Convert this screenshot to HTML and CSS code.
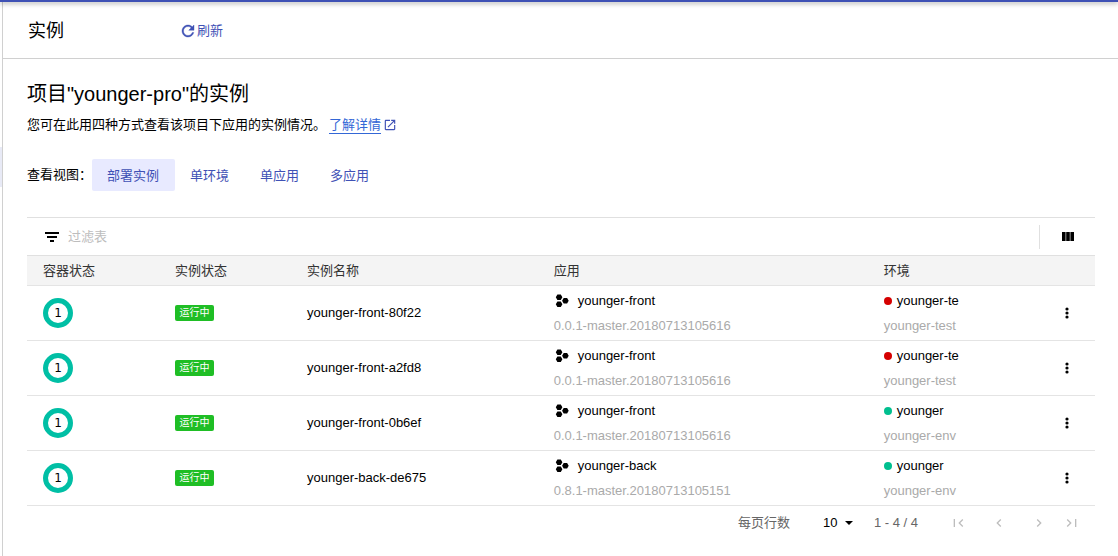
FILE: index.html
```html
<!DOCTYPE html>
<html lang="zh-CN">
<head>
<meta charset="utf-8">
<title>实例</title>
<link rel="stylesheet" href="styles.css">
</head>
<body>
<svg class="sprite" aria-hidden="true">
  <symbol id="more" viewBox="0 0 16 16"><circle cx="8" cy="4" r="1.600"/><circle cx="8" cy="8" r="1.600"/><circle cx="8" cy="12" r="1.600"/></symbol>
  <symbol id="app" viewBox="0 0 14 14"><path d="M2.400.5h3.400l1.600 2.700-1.600 2.700H2.400L.8 3.200zM2.400 7.600h3.400l1.600 2.700L5.800 13H2.400L.8 10.300zM8.700 4h3.400l1.600 2.800-1.600 2.700H8.700L7.100 6.800z"/></symbol>
</svg>
<div class="topbar"></div>
<div class="shell">
  <div class="rail"><div class="rail-active"></div></div>
  <main class="page">
    <header class="page-header">
      <h1 class="page-title">实例</h1>
      <button class="refresh" type="button">
        <svg class="icon-18" viewBox="0 0 24 24"><path stroke="currentColor" stroke-width=".5" d="M17.650 6.350C16.200 4.900 14.210 4 12 4c-4.420 0-7.990 3.580-7.990 8s3.570 8 7.990 8c3.730 0 6.840-2.550 7.730-6h-2.080c-.82 2.330-3.040 4-5.650 4-3.310 0-6-2.690-6-6s2.690-6 6-6c1.660 0 3.140.69 4.220 1.780L13 11h7V4l-2.350 2.350z"/></svg>
        <span>刷新</span>
      </button>
    </header>
    <div class="content">
      <h2 class="heading">项目"younger-pro"的实例</h2>
      <p class="intro">您可在此用四种方式查看该项目下应用的实例情况。<a class="more-link" href="#"><span class="more-text">了解详情</span><svg class="icon-14" viewBox="0 0 24 24"><path d="M19 19H5V5h7V3H5c-1.110 0-2 .9-2 2v14c0 1.100.89 2 2 2h14c1.100 0 2-.9 2-2v-7h-2v7zM14 3v2h3.590l-9.830 9.830 1.410 1.410L19 6.410V10h2V3h-7z"/></svg></a></p>
      <div class="views">
        <span class="views-label">查看视图：</span>
        <button class="view active" type="button">部署实例</button>
        <button class="view" type="button">单环境</button>
        <button class="view" type="button">单应用</button>
        <button class="view" type="button">多应用</button>
      </div>
      <div class="filter">
        <svg class="icon-18" viewBox="0 0 18 18"><path d="M2 4h14v2H2zM4 8h10v2H4zM7 12h4v2H7z"/></svg>
        <input class="filter-input" type="text" placeholder="过滤表" aria-label="过滤表">
        <button class="columns" type="button" aria-label="列"><svg class="icon-columns" viewBox="0 0 12 9"><path d="M0 0h3.600v9H0zM4.200 0h3.600v9H4.200zM8.400 0H12v9H8.400z"/></svg></button>
      </div>
      <table class="grid">
        <colgroup><col class="c-status"><col class="c-status"><col class="c-name"><col class="c-app"><col><col class="c-menu"></colgroup>
        <thead><tr><th>容器状态</th><th>实例状态</th><th>实例名称</th><th>应用</th><th>环境</th><th></th></tr></thead>
        <tbody>
          <tr>
            <td><span class="ring">1</span></td><td><span class="badge">运行中</span></td><td>younger-front-80f22</td>
            <td><div class="line"><svg class="app-icon"><use href="#app"/></svg>younger-front</div><div class="sub">0.0.1-master.20180713105616</div></td>
            <td><div class="line"><i class="dot red"></i>younger-te</div><div class="sub">younger-test</div></td>
            <td class="menu-cell"><button class="menu" type="button" aria-label="更多"><svg class="icon-16"><use href="#more"/></svg></button></td>
          </tr>
          <tr>
            <td><span class="ring">1</span></td><td><span class="badge">运行中</span></td><td>younger-front-a2fd8</td>
            <td><div class="line"><svg class="app-icon"><use href="#app"/></svg>younger-front</div><div class="sub">0.0.1-master.20180713105616</div></td>
            <td><div class="line"><i class="dot red"></i>younger-te</div><div class="sub">younger-test</div></td>
            <td class="menu-cell"><button class="menu" type="button" aria-label="更多"><svg class="icon-16"><use href="#more"/></svg></button></td>
          </tr>
          <tr>
            <td><span class="ring">1</span></td><td><span class="badge">运行中</span></td><td>younger-front-0b6ef</td>
            <td><div class="line"><svg class="app-icon"><use href="#app"/></svg>younger-front</div><div class="sub">0.0.1-master.20180713105616</div></td>
            <td><div class="line"><i class="dot"></i>younger</div><div class="sub">younger-env</div></td>
            <td class="menu-cell"><button class="menu" type="button" aria-label="更多"><svg class="icon-16"><use href="#more"/></svg></button></td>
          </tr>
          <tr>
            <td><span class="ring">1</span></td><td><span class="badge">运行中</span></td><td>younger-back-de675</td>
            <td><div class="line"><svg class="app-icon"><use href="#app"/></svg>younger-back</div><div class="sub">0.8.1-master.20180713105151</div></td>
            <td><div class="line"><i class="dot"></i>younger</div><div class="sub">younger-env</div></td>
            <td class="menu-cell"><button class="menu" type="button" aria-label="更多"><svg class="icon-16"><use href="#more"/></svg></button></td>
          </tr>
        </tbody>
      </table>
      <div class="pager">
        <label class="pager-label" for="rows">每页行数</label>
        <div class="select-box">
          <select class="rows" id="rows"><option>10</option></select>
          <svg class="caret" viewBox="0 0 8 4"><path d="M0 0h8L4 4z"/></svg>
        </div>
        <span class="range">1 - 4 / 4</span>
        <div class="pages">
          <button class="page-btn" type="button" aria-label="首页"><svg class="icon-16" viewBox="0 0 24 24"><path d="M18.410 16.590L13.820 12l4.590-4.590L17 6l-6 6 6 6zM4 6h2v12H4z"/></svg></button>
          <button class="page-btn" type="button" aria-label="上一页"><svg class="icon-16" viewBox="0 0 24 24"><path d="M15.410 7.410L14 6l-6 6 6 6 1.410-1.410L10.830 12z"/></svg></button>
          <button class="page-btn" type="button" aria-label="下一页"><svg class="icon-16" viewBox="0 0 24 24"><path d="M10 6L8.590 7.410 13.170 12l-4.580 4.590L10 18l6-6z"/></svg></button>
          <button class="page-btn last" type="button" aria-label="末页"><svg class="icon-16" viewBox="0 0 24 24"><path d="M5.590 7.410L10.180 12l-4.590 4.590L7 18l6-6-6-6zM18 6h2v12h-2z"/></svg></button>
        </div>
      </div>
    </div>
  </main>
</div>
</body>
</html>
```
FILE: styles.css
```css
* { box-sizing: border-box; }
body {
  margin: 0;
  min-height: 100vh;
  display: flex;
  flex-direction: column;
  background: #fff;
  color: #000;
  font: 13px/20px "Liberation Sans", "Noto Sans CJK SC", sans-serif;
}
button, input, select { font: inherit; color: inherit; border: 0; padding: 0; background: none; border-radius: 0; }
button { display: flex; align-items: center; justify-content: center; cursor: pointer; }
svg { display: block; fill: currentColor; flex: none; }
.sprite { position: absolute; width: 0; height: 0; }
.icon-18 { width: 18px; height: 18px; }
.icon-16 { width: 16px; height: 16px; }
.icon-14 { width: 14px; height: 14px; }
.icon-columns { width: 12px; height: 9px; }

.topbar { height: 2px; background: #3f51b5; box-shadow: 0 1px 5px rgba(0, 0, 0, .5); z-index: 1; }
.shell { flex: 1; display: flex; }
.rail { width: 3px; border-right: 1px solid #d0d0d0; padding-top: 145px; }
.rail-active { height: 40px; background: #e8eaf6; }
.page { flex: 1; min-width: 0; }
.page-header { height: 57px; display: flex; align-items: center; gap: 115px; padding: 1px 0 0 25px; border-bottom: 1px solid #d0d0d0; }
.page-title { margin: 0; font-size: 18px; font-weight: 400; }
.refresh { gap: 0; padding-top: 1px; color: #3f51b5; }
.content { padding: 21px 23px 0 24px; }
.heading { margin: 0; font-size: 20px; line-height: 28px; font-weight: 400; }
.intro { margin: 7px 0 0; display: flex; align-items: center; }
.more-link { display: flex; align-items: center; gap: 2px; margin-left: 3px; color: #3367d6; text-decoration: none; }
.more-text { line-height: 16px; border-bottom: 1px solid #3367d6; }
.more-link .icon-14 { color: #3f51b5; }
.views { display: flex; align-items: center; margin-top: 24px; }
.views-label { width: 65px; white-space: nowrap; }
.view { height: 32px; margin-right: 1px; padding: 1px 15px 0; color: #3f51b5; border-radius: 2px; }
.view.active { margin-right: 0; padding-right: 16px; background: #e8eaff; }

.filter { display: flex; align-items: center; height: 38px; margin-top: 26px; padding-left: 16px; border-top: 1px solid #e0e0e0; }
.filter-input { flex: 1; margin-left: 7px; outline: 0; }
.filter-input::placeholder { color: #bdbdbd; }
.columns { width: 56px; height: 24px; border-left: 1px solid #e0e0e0; }

.grid { width: 100%; table-layout: fixed; border-collapse: collapse; }
.c-status { width: 132px; }
.c-name { width: 23.1%; }
.c-app { width: 30.9%; }
.c-menu { width: 56px; }
.grid th { height: 30px; padding: 0 0 0 16px; background: #f4f4f4; border-top: 1px solid #e0e0e0; border-bottom: 1px solid #e4e4e4; color: #333; font-weight: 400; text-align: left; }
.grid td { height: 55px; padding: 0 0 0 16px; border-bottom: 1px solid #e4e4e4; }
.grid .menu-cell { padding: 0; }
.menu { width: 100%; height: 24px; }
.ring { display: flex; align-items: center; justify-content: center; width: 30px; height: 30px; border: 5px solid #00bfa5; border-radius: 50%; font-family: "DejaVu Sans", sans-serif; font-size: 12px; }
.badge { display: block; width: 39px; height: 16px; border-radius: 2px; background: #1fbe25; color: #fff; font-size: 10px; line-height: 16px; text-align: center; }
.line { display: flex; align-items: center; line-height: 25px; }
.sub { color: #aaa; line-height: 25px; }
.app-icon { width: 14px; height: 14px; margin: 0 9px 0 1px; }
.dot { width: 8px; height: 8px; margin-right: 5px; border-radius: 50%; background: #00bf8f; }
.dot.red { background: #d50000; }

.pager { display: flex; justify-content: flex-end; align-items: center; height: 34px; padding-right: 12px; color: #666; white-space: nowrap; }
.select-box { display: flex; align-items: center; margin-left: 33px; color: #000; }
.rows { width: 15px; appearance: none; outline: 0; }
.caret { width: 8px; height: 4px; margin-left: 7px; }
.range { margin-left: 21px; }
.pages { display: flex; margin-left: 21px; color: #bdbdbd; }
.page-btn { width: 40px; height: 24px; }
.page-btn.last { width: 24px; }
```
